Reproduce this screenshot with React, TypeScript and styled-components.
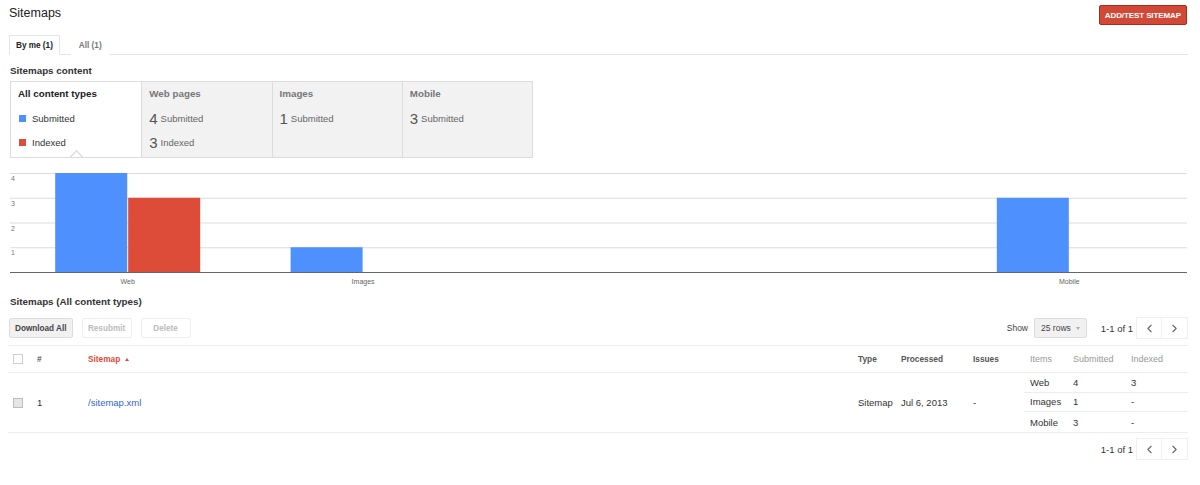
import React from "react";
import styled, { createGlobalStyle } from "styled-components";
import { ChevronLeft, ChevronRight } from "lucide-react";

const GlobalStyle = createGlobalStyle`
  html, body { margin: 0; padding: 0; background: #fff; }
  body {
    font-family: "Liberation Sans", Arial, sans-serif;
    color: #222;
  }
  * { box-sizing: border-box; }
`;

const BLUE = "#4d90fe";
const RED = "#dd4b39";

const Page = styled.div`
  width: 1200px;
  padding: 0 12px 0 8px;
`;

const TopBar = styled.div`
  display: flex;
  justify-content: space-between;
  align-items: flex-start;
  height: 30px;
  padding-top: 5px;
`;

const Title = styled.h1`
  margin: 0 0 0 1px;
  font-size: 12.5px;
  line-height: 16px;
  font-weight: normal;
  color: #222;
`;

const PrimaryButton = styled.button`
  height: 20px;
  padding: 0 5px;
  margin-right: 1px;
  border: 1px solid #b0281a;
  border-radius: 2px;
  background: #d14836;
  color: #fff;
  font-family: inherit;
  font-size: 8px;
  font-weight: bold;
  letter-spacing: -0.1px;
`;

const Tabs = styled.div`
  display: flex;
  height: 20px;
  margin: 5px 0 0 1px;
  border-bottom: 1px solid #e5e5e5;
`;

const Tab = styled.div<{ $active?: boolean }>`
  height: 20px;
  padding: 0 ${(p) => (p.$active ? "6px" : "7px")};
  margin-left: ${(p) => (p.$active ? "0" : "11px")};
  line-height: 19px;
  font-size: 8.2px;
  font-weight: bold;
  color: ${(p) => (p.$active ? "#222" : "#777")};
  background: #fff;
  border: 1px solid ${(p) => (p.$active ? "#e5e5e5" : "transparent")};
  border-bottom-color: #fff;
`;

const SectionTitle = styled.h2<{ $gap: number }>`
  margin: ${(p) => p.$gap}px 0 0 2px;
  font-size: 9.8px;
  line-height: 12px;
  font-weight: bold;
  color: #333;
`;

const TypePanel = styled.div`
  display: grid;
  grid-template-columns: repeat(4, 1fr);
  width: 523px;
  height: 77px;
  margin: 4px 0 0 2px;
  border: 1px solid #dcdcdc;
`;

const TypeCell = styled.div<{ $selected?: boolean }>`
  position: relative;
  padding: 6px 7px 0 7px;
  background: ${(p) => (p.$selected ? "#fff" : "#f2f2f2")};
  & + & { border-left: 1px solid #dcdcdc; }

  ${(p) =>
    p.$selected &&
    `
    &::after {
      content: "";
      position: absolute;
      left: 61px;
      bottom: -4px;
      width: 8px;
      height: 8px;
      border-left: 1px solid #cfcfcf;
      border-top: 1px solid #cfcfcf;
      transform: rotate(45deg);
    }
  `}
`;

const CellTitle = styled.div<{ $selected?: boolean }>`
  font-size: 9.8px;
  line-height: 12px;
  font-weight: bold;
  color: ${(p) => (p.$selected ? "#222" : "#777")};
  margin-bottom: 6px;
`;

const StatRow = styled.div`
  display: flex;
  align-items: center;
  height: 24px;
  font-size: 9.5px;
  color: #666;
`;

const Swatch = styled.span<{ $color: string }>`
  width: 7px;
  height: 7px;
  margin: 0 6px 0 1px;
  background: ${(p) => p.$color};
`;

const LegendText = styled.span`
  color: #333;
`;

const BigNumber = styled.span`
  font-size: 15px;
  color: #555;
  margin-right: 3px;
`;

const ChartBox = styled.div`
  margin-top: 7px;
  height: 125px;
`;

const Toolbar = styled.div`
  display: flex;
  align-items: center;
  height: 20px;
  margin: 10px 0 0 1px;
`;

const ToolButton = styled.button<{ $disabled?: boolean }>`
  height: 20px;
  min-width: 50px;
  padding: 0 5px;
  margin-right: 9px;
  border: 1px solid ${(p) => (p.$disabled ? "#eeeeee" : "#dcdcdc")};
  border-radius: 2px;
  background: ${(p) => (p.$disabled ? "#fff" : "#f1f1f1")};
  color: ${(p) => (p.$disabled ? "#bbb" : "#444")};
  font-family: inherit;
  font-size: 8.2px;
  font-weight: bold;
`;

const Spacer = styled.div`
  flex: 1;
`;

const ShowLabel = styled.span`
  font-size: 8.5px;
  color: #444;
  margin-right: 6px;
`;

const RowsSelect = styled.div`
  display: flex;
  align-items: center;
  height: 20px;
  padding: 0 6px;
  border: 1px solid #dcdcdc;
  border-radius: 2px;
  background: #f1f1f1;
  font-size: 8.5px;
  color: #444;
  margin-right: 14px;

  &::after {
    content: "";
    margin-left: 5px;
    border-left: 2.5px solid transparent;
    border-right: 2.5px solid transparent;
    border-top: 3px solid #aaa;
  }
`;

const Pager = styled.div<{ $top?: number }>`
  display: flex;
  align-items: center;
  justify-content: flex-end;
  margin-top: ${(p) => p.$top ?? 0}px;
  height: 22px;
`;

const PageCount = styled.span`
  font-size: 9.5px;
  color: #333;
  margin-right: 3px;
`;

const PageButton = styled.button`
  width: 26px;
  height: 22px;
  display: flex;
  align-items: center;
  justify-content: center;
  padding: 0;
  border: 1px solid #f0f0f0;
  background: #fff;
  color: #666;
  & + & { border-left: none; }
`;

const COLS = "29px 51px 1fr 43px 72px 51px 49px 58px 57px";

const HeaderRow = styled.div`
  display: grid;
  grid-template-columns: ${COLS};
  align-items: center;
  height: 28px;
  margin-top: 7px;
  border-top: 1px solid #ededed;
  border-bottom: 1px solid #ededed;
`;

const HeadCell = styled.div<{ $muted?: boolean; $sorted?: boolean; $pad?: number }>`
  display: flex;
  align-items: center;
  padding-left: ${(p) => p.$pad ?? 0}px;
  font-size: ${(p) => (p.$muted ? "9px" : "8.3px")};
  font-weight: ${(p) => (p.$muted ? "normal" : "bold")};
  color: ${(p) => (p.$sorted ? RED : p.$muted ? "#999" : "#555")};
`;

const SortArrow = styled.span`
  margin-left: 5px;
  border-left: 2.5px solid transparent;
  border-right: 2.5px solid transparent;
  border-bottom: 3px solid ${RED};
`;

const Check = styled.span<{ $filled?: boolean }>`
  display: block;
  width: 10px;
  height: 10px;
  margin-left: 5px;
  border: 1px solid ${(p) => (p.$filled ? "#bdbdbd" : "#cfcfcf")};
  background: ${(p) => (p.$filled ? "#e6e6e6" : "#fff")};
`;

const DataRow = styled.div`
  display: grid;
  grid-template-columns: ${COLS};
  height: 60px;
  border-bottom: 1px solid #ededed;
`;

const Cell = styled.div<{ $link?: boolean; $pad?: number }>`
  align-self: center;
  padding-left: ${(p) => p.$pad ?? 0}px;
  font-size: 9.5px;
  color: ${(p) => (p.$link ? "#3366cc" : "#333")};
`;

const ItemsTable = styled.div`
  grid-column: 7 / span 3;
  display: grid;
  grid-template-rows: repeat(3, 1fr);
`;

const ItemRow = styled.div`
  display: grid;
  grid-template-columns: 49px 58px 57px;
  align-items: center;
  font-size: 9.5px;
  color: #333;
  &:not(:last-child) { border-bottom: 1px solid #ededed; }
  & > span:first-child { padding-left: 6px; }
`;

type Category = { label: string; submitted: number; indexed: number };

const categories: Category[] = [
  { label: "Web", submitted: 4, indexed: 3 },
  { label: "Images", submitted: 1, indexed: 0 },
  { label: "", submitted: 0, indexed: 0 },
  { label: "", submitted: 0, indexed: 0 },
  { label: "Mobile", submitted: 3, indexed: 0 },
];

function BarChart() {
  const width = 1180;
  const left = 2;
  const right = 1179;
  const base = 107;
  const unit = 24.75;
  const catW = (right - left) / categories.length;
  const barW = 72;
  return (
    <svg width={width} height={125} viewBox={`0 0 ${width} 125`}>
      {[4, 3, 2, 1].map((v) => {
        const y = base - v * unit + 0.5;
        return (
          <g key={v}>
            <line x1={left} x2={right} y1={y} y2={y} stroke="#dcdcdc" strokeWidth={1} />
            <text x={left + 1} y={y + 7.5} fontSize={7} fill="#777" fontFamily="Liberation Sans, Arial, sans-serif">
              {v}
            </text>
          </g>
        );
      })}
      {categories.map((c, i) => {
        const cx = left + catW * (i + 0.5);
        return (
          <g key={i}>
            {c.submitted > 0 && (
              <rect x={cx - barW - 0.5} y={base - c.submitted * unit} width={barW} height={c.submitted * unit} fill={BLUE} />
            )}
            {c.indexed > 0 && (
              <rect x={cx + 0.5} y={base - c.indexed * unit} width={barW} height={c.indexed * unit} fill={RED} />
            )}
            {c.label && (
              <text x={cx} y={base + 12} fontSize={7} fill="#666" textAnchor="middle" fontFamily="Liberation Sans, Arial, sans-serif">
                {c.label}
              </text>
            )}
          </g>
        );
      })}
      <line x1={left} x2={right} y1={base + 0.5} y2={base + 0.5} stroke="#666" strokeWidth={1} />
    </svg>
  );
}

function PagerControls({ top }: { top?: number }) {
  return (
    <>
      <PageCount>1-1 of 1</PageCount>
      <PageButton aria-label="Previous">
        <ChevronLeft size={13} strokeWidth={2} />
      </PageButton>
      <PageButton aria-label="Next">
        <ChevronRight size={13} strokeWidth={2} />
      </PageButton>
    </>
  );
}

export default function App() {
  return (
    <Page>
      <GlobalStyle />
      <TopBar>
        <Title>Sitemaps</Title>
        <PrimaryButton>ADD/TEST SITEMAP</PrimaryButton>
      </TopBar>

      <Tabs>
        <Tab $active>By me (1)</Tab>
        <Tab>All (1)</Tab>
      </Tabs>

      <SectionTitle $gap={10}>Sitemaps content</SectionTitle>
      <TypePanel>
        <TypeCell $selected>
          <CellTitle $selected>All content types</CellTitle>
          <StatRow>
            <Swatch $color={BLUE} />
            <LegendText>Submitted</LegendText>
          </StatRow>
          <StatRow>
            <Swatch $color={RED} />
            <LegendText>Indexed</LegendText>
          </StatRow>
        </TypeCell>
        <TypeCell>
          <CellTitle>Web pages</CellTitle>
          <StatRow>
            <BigNumber>4</BigNumber>Submitted
          </StatRow>
          <StatRow>
            <BigNumber>3</BigNumber>Indexed
          </StatRow>
        </TypeCell>
        <TypeCell>
          <CellTitle>Images</CellTitle>
          <StatRow>
            <BigNumber>1</BigNumber>Submitted
          </StatRow>
        </TypeCell>
        <TypeCell>
          <CellTitle>Mobile</CellTitle>
          <StatRow>
            <BigNumber>3</BigNumber>Submitted
          </StatRow>
        </TypeCell>
      </TypePanel>

      <ChartBox>
        <BarChart />
      </ChartBox>

      <SectionTitle $gap={6}>Sitemaps (All content types)</SectionTitle>
      <Toolbar>
        <ToolButton>Download All</ToolButton>
        <ToolButton $disabled>Resubmit</ToolButton>
        <ToolButton $disabled>Delete</ToolButton>
        <Spacer />
        <ShowLabel>Show</ShowLabel>
        <RowsSelect>25 rows</RowsSelect>
        <PagerControls />
      </Toolbar>

      <HeaderRow>
        <HeadCell>
          <Check />
        </HeadCell>
        <HeadCell>#</HeadCell>
        <HeadCell $sorted>
          Sitemap
          <SortArrow />
        </HeadCell>
        <HeadCell>Type</HeadCell>
        <HeadCell>Processed</HeadCell>
        <HeadCell>Issues</HeadCell>
        <HeadCell $muted $pad={6}>Items</HeadCell>
        <HeadCell $muted>Submitted</HeadCell>
        <HeadCell $muted>Indexed</HeadCell>
      </HeaderRow>

      <DataRow>
        <Cell>
          <Check $filled />
        </Cell>
        <Cell>1</Cell>
        <Cell $link>/sitemap.xml</Cell>
        <Cell>Sitemap</Cell>
        <Cell>Jul 6, 2013</Cell>
        <Cell>-</Cell>
        <ItemsTable>
          <ItemRow>
            <span>Web</span>
            <span>4</span>
            <span>3</span>
          </ItemRow>
          <ItemRow>
            <span>Images</span>
            <span>1</span>
            <span>-</span>
          </ItemRow>
          <ItemRow>
            <span>Mobile</span>
            <span>3</span>
            <span>-</span>
          </ItemRow>
        </ItemsTable>
      </DataRow>

      <Pager $top={5}>
        <PagerControls />
      </Pager>
    </Page>
  );
}
